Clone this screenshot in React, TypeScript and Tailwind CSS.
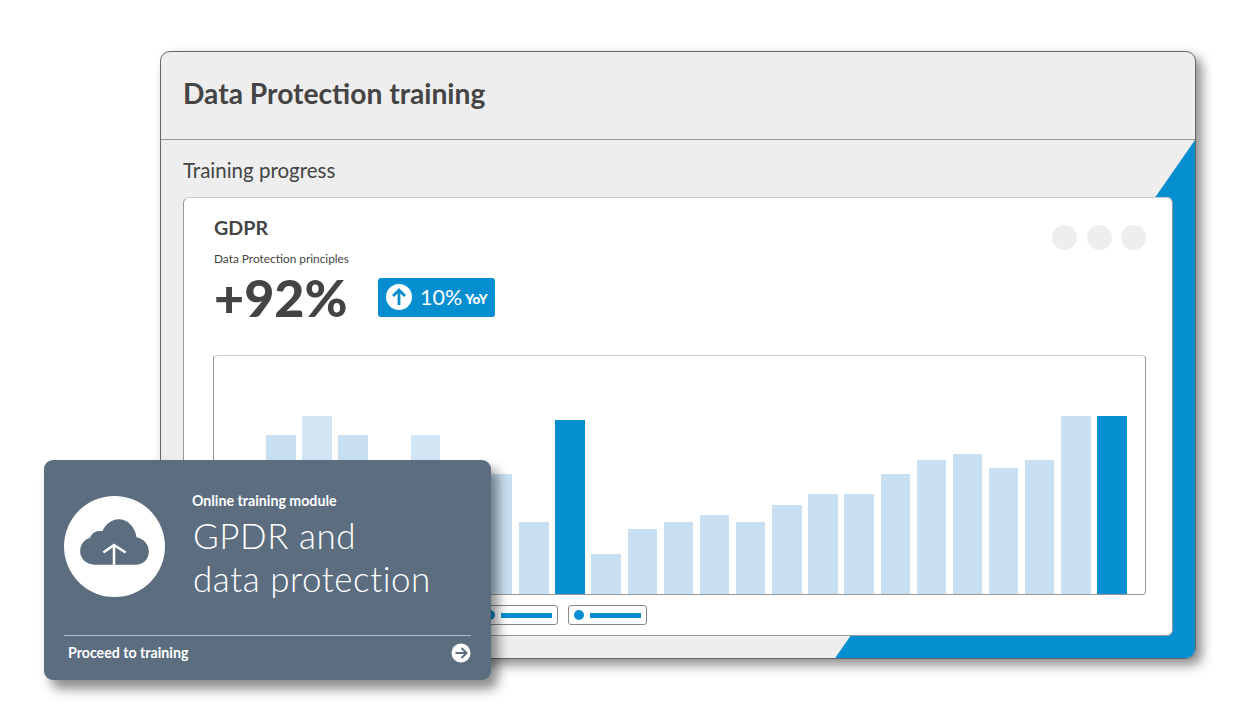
import React from "react";

const bars = [
  { h: 109, c: "bg-[#c9e0f3]" },
  { h: 159, c: "bg-[#c9e0f3]" },
  { h: 178, c: "bg-[#d3e6f6]" },
  { h: 159, c: "bg-[#c9e0f3]" },
  { h: 109, c: "bg-[#c9e0f3]" },
  { h: 159, c: "bg-[#d3e6f6]" },
  { h: 109, c: "bg-[#c9e0f3]" },
  { h: 120, c: "bg-[#c9e0f3]" },
  { h: 72, c: "bg-[#c9e0f3]" },
  { h: 174, c: "bg-[#058ed0]" },
  { h: 40, c: "bg-[#c9e0f3]" },
  { h: 65, c: "bg-[#c9e0f3]" },
  { h: 72, c: "bg-[#c9e0f3]" },
  { h: 79, c: "bg-[#c9e0f3]" },
  { h: 72, c: "bg-[#c9e0f3]" },
  { h: 89, c: "bg-[#c9e0f3]" },
  { h: 100, c: "bg-[#c9e0f3]" },
  { h: 100, c: "bg-[#c9e0f3]" },
  { h: 120, c: "bg-[#c9e0f3]" },
  { h: 134, c: "bg-[#c9e0f3]" },
  { h: 140, c: "bg-[#c9e0f3]" },
  { h: 126, c: "bg-[#c9e0f3]" },
  { h: 134, c: "bg-[#c9e0f3]" },
  { h: 178, c: "bg-[#c9e0f3]" },
  { h: 178, c: "bg-[#058ed0]" },
];

function Legend() {
  return (
    <div className="flex h-[20px] w-[79px] items-center gap-[6px] rounded-[3px] border border-[#888] pl-[5px]">
      <span className="h-[10px] w-[10px] rounded-full bg-[#058ed0]" />
      <span className="h-[5px] w-[51px] bg-[#058ed0]" />
    </div>
  );
}

export default function App() {
  return (
    <div className="relative h-[721px] w-[1244px] overflow-hidden bg-white pl-[160px] pt-[51px] font-['Lato',sans-serif] text-[#444]">
      <div className="flex h-[608px] w-[1036px] flex-col overflow-hidden rounded-[10px] border border-[#666] bg-[#eee] shadow-[6px_6px_12px_rgba(0,0,0,0.45)]">
        <div className="flex h-[88px] shrink-0 items-start border-b border-[#999] pl-[22px] pt-[22px]">
          <h1 className="text-[28.2px] font-bold leading-[38px]">Data Protection training</h1>
        </div>
        <div className="relative flex-1 pl-[22px] pt-[18px]">
          <div className="absolute inset-0 bg-[#058ed0] [clip-path:polygon(100%_0,100%_100%,65.2%_100%)]" />
          <div className="relative text-[20.5px] leading-[24px]">Training progress</div>
          <div className="relative mt-[15px] h-[439px] w-[990px] rounded-[6px] border border-[#999] border-t-[#ccc] bg-white pl-[30px] pt-[18px]">
            <div className="flex items-start justify-between pr-[26px]">
              <div className="text-[19.7px] font-bold leading-[24px]">GDPR</div>
              <div className="mt-[9px] flex gap-[9.5px]">
                <span className="h-[25px] w-[25px] rounded-full bg-[#eee]" />
                <span className="h-[25px] w-[25px] rounded-full bg-[#eee]" />
                <span className="h-[25px] w-[25px] rounded-full bg-[#eee]" />
              </div>
            </div>
            <div className="mt-[2px] text-[11.85px] leading-[14px]">Data Protection principles</div>
            <div className="mt-[4px] flex h-[54px] items-center">
              <span className="mt-[-1px] w-[164px] text-[52px] font-black leading-[54px]">+92%</span>
              <div className="flex h-[39px] w-[117px] items-center rounded-[3px] bg-[#058ed0] pl-[8px] text-white">
                <svg width="26" height="26" viewBox="0 0 26 26">
                  <circle cx="13" cy="13" r="13" fill="#fff" />
                  <path d="M13 21V6M7 12l6-6 6 6" fill="none" stroke="#058ed0" strokeWidth="2.8" />
                </svg>
                <span className="ml-[8px] text-[21.5px] font-normal leading-[26px]">10%</span>
                <span className="ml-[3px] mt-[3px] text-[13.5px] font-black leading-[16px]">YoY</span>
              </div>
            </div>
            <div className="ml-[-1px] mt-[31px] flex h-[240px] w-[933px] items-end gap-[6.75px] rounded-[4px] border border-[#999] border-t-[#ccc] pl-[16px]">
              {bars.map((b, i) => (
                <div key={i} style={{ height: b.h }} className={`w-[29.4px] shrink-0 ${b.c}`} />
              ))}
            </div>
            <div className="ml-[265px] mt-[10px] flex gap-[10px]">
              <Legend />
              <Legend />
            </div>
          </div>
        </div>
      </div>

      <div className="absolute left-[44px] top-[460px] flex h-[220px] w-[447px] flex-col rounded-[9px] bg-[#5b6d7f] px-[20px] text-white shadow-[7px_9px_12px_rgba(0,0,0,0.45)]">
        <div className="flex h-[176px] shrink-0 items-start border-b border-[#b4bdc6]">
          <svg className="mt-[36px] shrink-0" width="101" height="101" viewBox="0 0 100 100">
            <circle cx="50" cy="50" r="50" fill="#fff" />
            <path
              d="M30 68C22 68 16 62 16 55C16 48 20 43 26 41C28 36 33 34 38 35C41 28 47 23 54 23C63 23 70 30 72 41C79 42 84 48 84 55C84 62 79 68 72 68Z"
              fill="#5b6d7f"
            />
            <path d="M49.5 68V49M39 56l10.5-7.5L61 56" fill="none" stroke="#fff" strokeWidth="2.5" />
          </svg>
          <div className="ml-[27px] pt-[32px]">
            <div className="text-[14.2px] font-bold leading-[18px]">Online training module</div>
            <div className="mt-[4px] pl-[1px] text-[35px] font-light leading-[43px] tracking-[0.55px]">
              GPDR and
              <br />
              data protection
            </div>
          </div>
        </div>
        <div className="flex flex-1 items-start justify-between pl-[4px] pt-[8px]">
          <span className="text-[14.2px] font-bold leading-[18px]">Proceed to training</span>
          <svg className="mt-[-1px]" width="20" height="20" viewBox="0 0 20 20">
            <circle cx="10" cy="10" r="9.5" fill="#fff" />
            <path d="M4.5 10H15M10.5 5l5 5-5 5" fill="none" stroke="#5b6d7f" strokeWidth="2" />
          </svg>
        </div>
      </div>
    </div>
  );
}
